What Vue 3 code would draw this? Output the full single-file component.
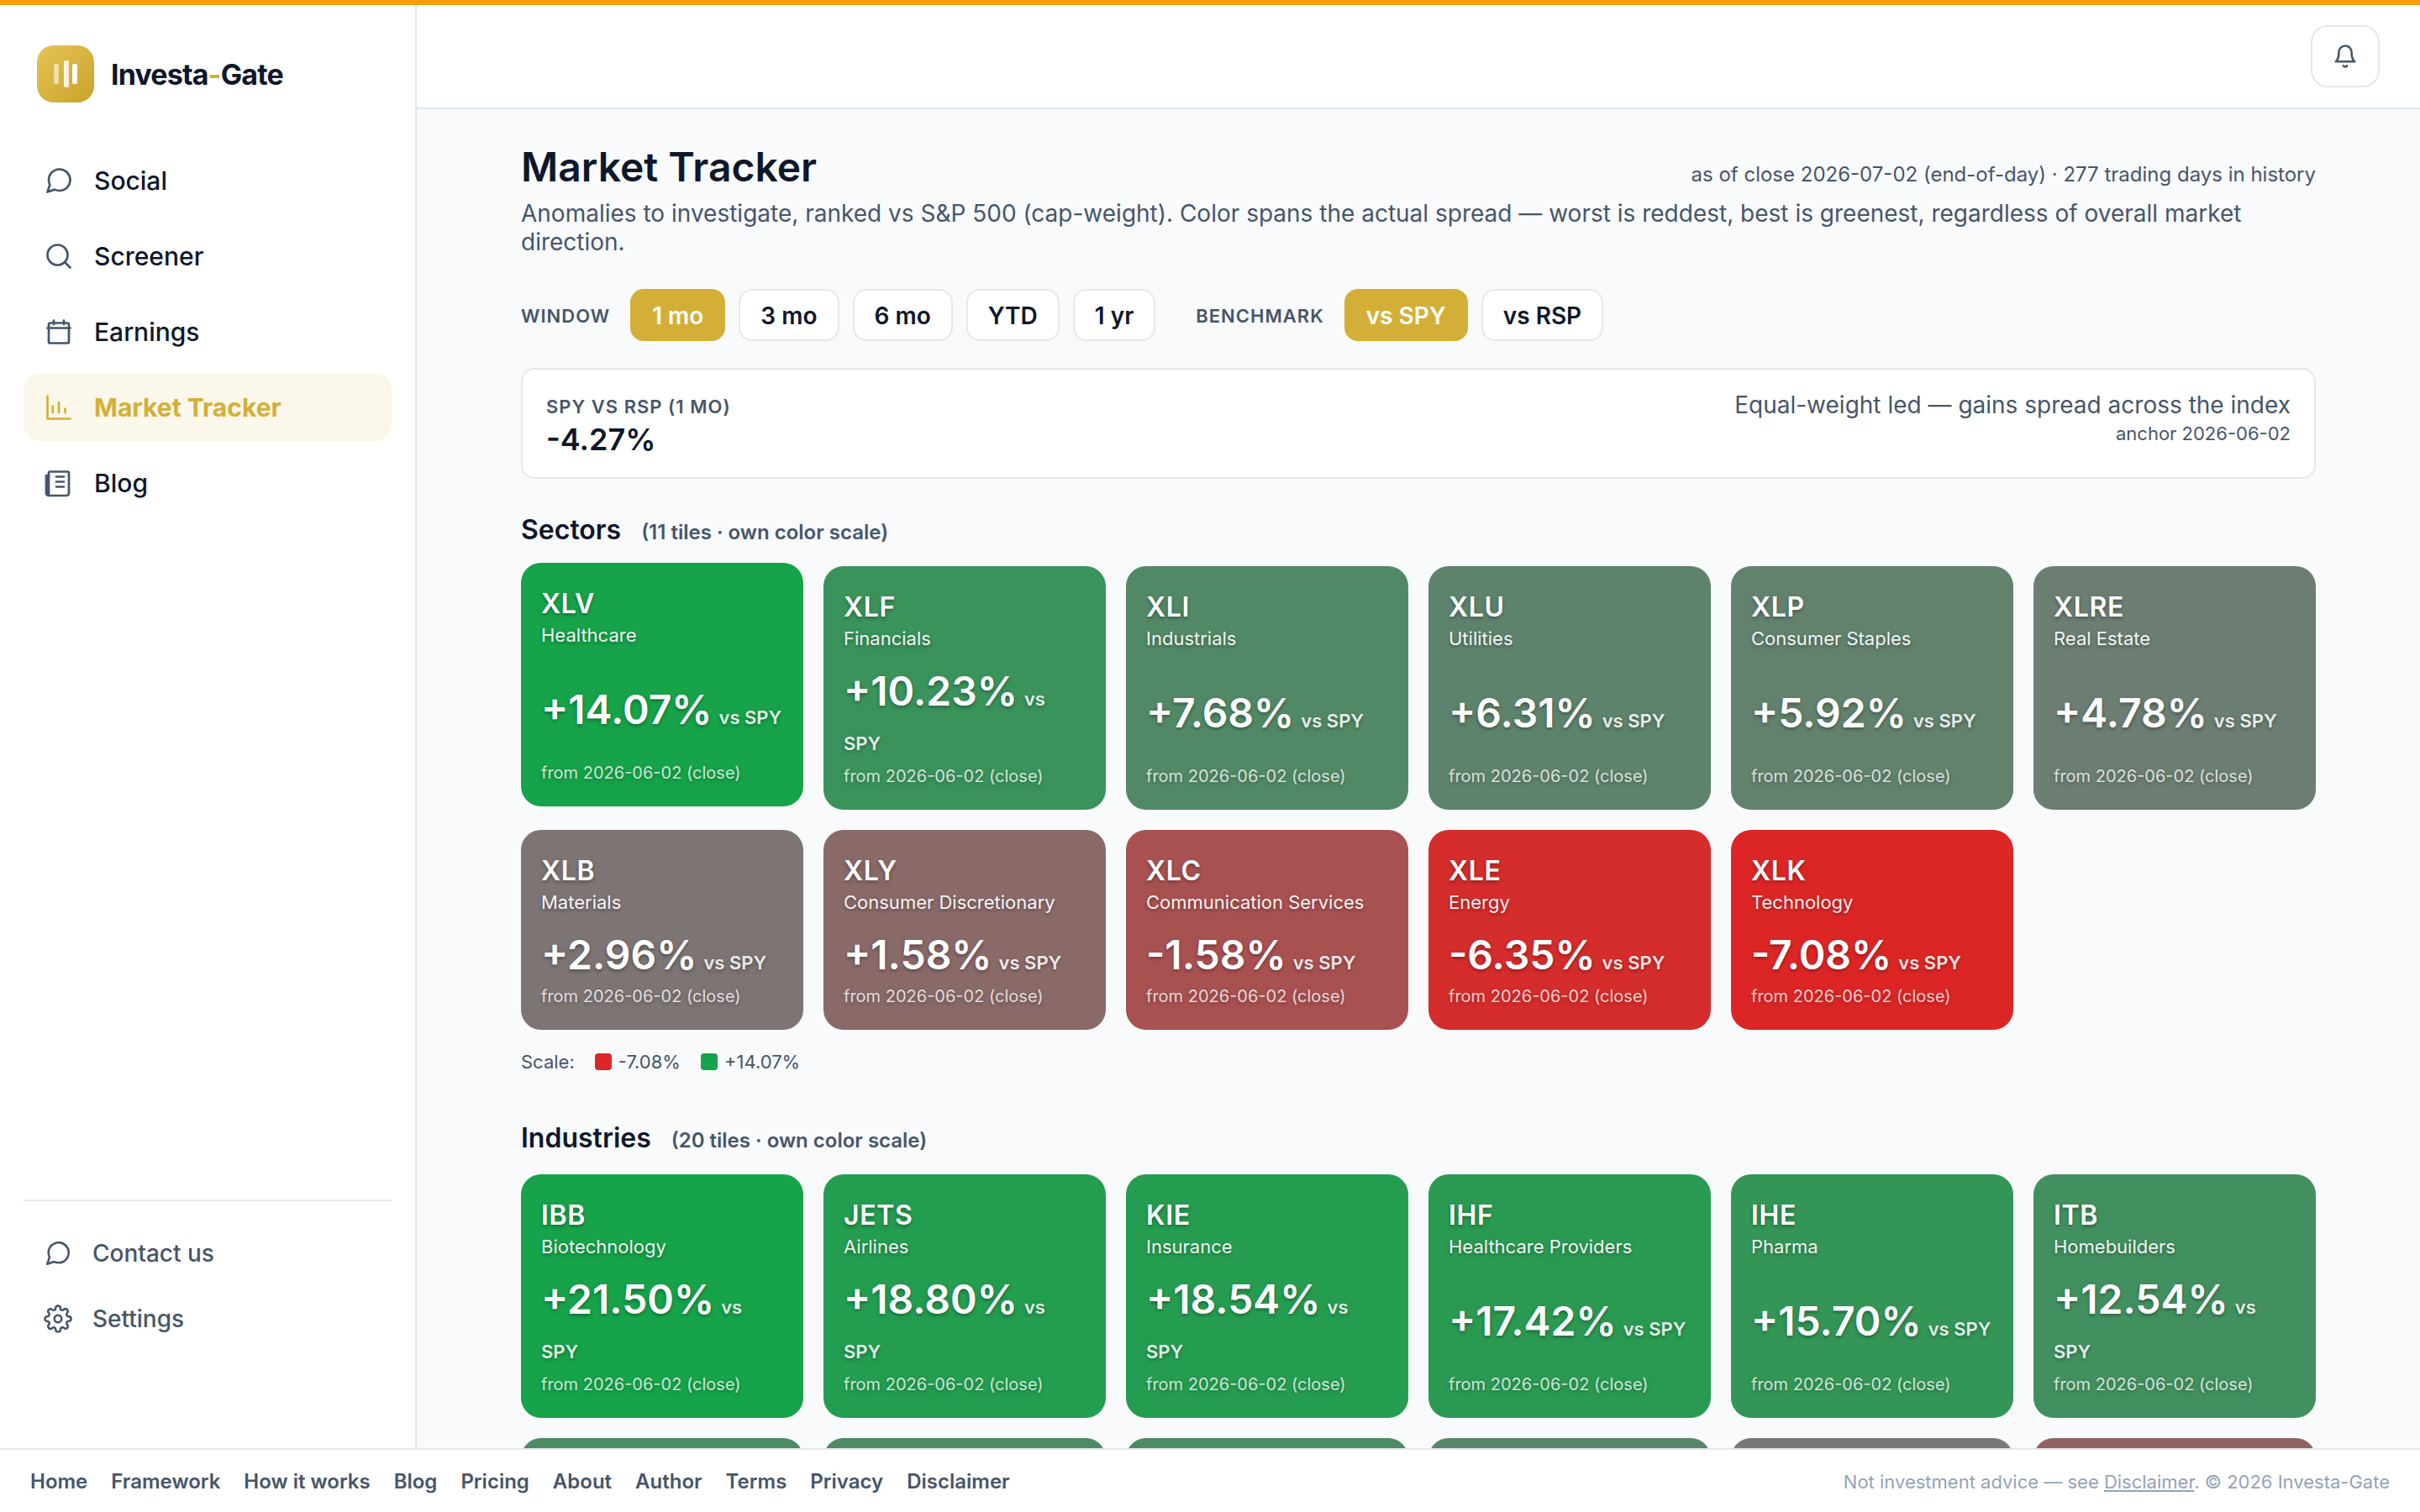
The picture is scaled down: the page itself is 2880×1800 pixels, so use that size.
<script setup>
import { ref, computed } from "vue";

const navItems = [
  { label: "Social", icon: "chat" },
  { label: "Screener", icon: "search" },
  { label: "Earnings", icon: "calendar" },
  { label: "Market Tracker", icon: "chart", active: true },
  { label: "Blog", icon: "news" },
];

const footerLinks = [
  "Home",
  "Framework",
  "How it works",
  "Blog",
  "Pricing",
  "About",
  "Author",
  "Terms",
  "Privacy",
  "Disclaimer",
];

const windows = ["1 mo", "3 mo", "6 mo", "YTD", "1 yr"];
const benchmarks = ["SPY", "RSP"];
const activeWindow = ref("1 mo");
const benchmark = ref("SPY");
const anchor = "2026-06-02";

const groups = [
  {
    title: "Sectors",
    count: 11,
    min: -7.08,
    max: 14.07,
    legend: true,
    tiles: [
      { ticker: "XLV", name: "Healthcare", value: 14.07, raised: true },
      { ticker: "XLF", name: "Financials", value: 10.23 },
      { ticker: "XLI", name: "Industrials", value: 7.68 },
      { ticker: "XLU", name: "Utilities", value: 6.31 },
      { ticker: "XLP", name: "Consumer Staples", value: 5.92 },
      { ticker: "XLRE", name: "Real Estate", value: 4.78 },
      { ticker: "XLB", name: "Materials", value: 2.96 },
      { ticker: "XLY", name: "Consumer Discretionary", value: 1.58 },
      { ticker: "XLC", name: "Communication Services", value: -1.58 },
      { ticker: "XLE", name: "Energy", value: -6.35 },
      { ticker: "XLK", name: "Technology", value: -7.08 },
    ],
  },
  {
    title: "Industries",
    count: 20,
    min: -18.3,
    max: 21.5,
    tiles: [
      { ticker: "IBB", name: "Biotechnology", value: 21.5 },
      { ticker: "JETS", name: "Airlines", value: 18.8 },
      { ticker: "KIE", name: "Insurance", value: 18.54 },
      { ticker: "IHF", name: "Healthcare Providers", value: 17.42 },
      { ticker: "IHE", name: "Pharma", value: 15.7 },
      { ticker: "ITB", name: "Homebuilders", value: 12.54 },
      { value: 10.8 },
      { value: 10.1 },
      { value: 10.4 },
      { value: 7.8 },
      { value: 1.8 },
      { value: -3.4 },
    ],
  },
];

const GREEN = [22, 163, 74];
const GRAY = [120, 120, 120];
const RED = [220, 38, 38];

// gray sits at the midpoint of the group's own range
function tileColor(value, group) {
  const mid = (group.max + group.min) / 2;
  const t = (value - mid) / (group.max - mid);
  const end = t >= 0 ? GREEN : RED;
  const rgb = GRAY.map((c, i) => Math.round(c + (end[i] - c) * Math.abs(t)));
  return `rgb(${rgb.join(", ")})`;
}

function pct(value) {
  return (value > 0 ? "+" : "") + value.toFixed(2) + "%";
}

const spreadLabel = computed(() => `SPY vs RSP (${activeWindow.value})`);
</script>

<template>
  <div class="app">
    <div class="stripe"></div>

    <div class="shell">
      <aside class="sidebar">
        <div class="brand">
          <svg class="logo-bars" viewBox="0 0 68 68" fill="#fff">
            <rect x="20" y="22" width="6" height="24" rx="2" opacity="0.55" />
            <rect x="32" y="18" width="6" height="32" rx="2" opacity="0.85" />
            <rect x="42" y="22" width="6" height="24" rx="2" />
          </svg>
          <span class="brand-name">Investa<span class="dash">-</span>Gate</span>
        </div>

        <nav class="nav">
          <a
            v-for="item in navItems"
            :key="item.label"
            class="nav-item"
            :class="{ active: item.active }"
          >
            <svg class="icon" viewBox="0 0 24 24">
              <path
                v-if="item.icon === 'chat'"
                d="M21 11.5a8.38 8.38 0 0 1-.9 3.8 8.5 8.5 0 0 1-7.6 4.7 8.38 8.38 0 0 1-3.8-.9L3 21l1.9-5.7a8.38 8.38 0 0 1-.9-3.8 8.5 8.5 0 0 1 4.7-7.6 8.38 8.38 0 0 1 3.8-.9h.5a8.48 8.48 0 0 1 8 8v.5z"
              />
              <template v-else-if="item.icon === 'search'">
                <circle cx="11" cy="11" r="8" />
                <path d="M21 21l-4.35-4.35" />
              </template>
              <template v-else-if="item.icon === 'calendar'">
                <rect x="4" y="5" width="16" height="16" rx="1.2" />
                <path d="M8 3v3M16 3v3M3 9h18" />
              </template>
              <path
                v-else-if="item.icon === 'chart'"
                d="M3 3v18h18M7.2 11v5M12 8v8M17 13v3"
              />
              <template v-else>
                <path d="M4 22h14a2 2 0 0 0 2-2V4a1 1 0 0 0-1-1H5a1 1 0 0 0-1 1v18z" />
                <path d="M4 22a2 2 0 0 1-2-2V6h2M3 7v14M10 7h6M10 11h6M10 15h6" />
              </template>
            </svg>
            <span>{{ item.label }}</span>
          </a>
        </nav>

        <div class="side-bottom">
          <a class="side-link">
            <svg class="icon" viewBox="0 0 24 24">
              <path
                d="M21 11.5a8.38 8.38 0 0 1-.9 3.8 8.5 8.5 0 0 1-7.6 4.7 8.38 8.38 0 0 1-3.8-.9L3 21l1.9-5.7a8.38 8.38 0 0 1-.9-3.8 8.5 8.5 0 0 1 4.7-7.6 8.38 8.38 0 0 1 3.8-.9h.5a8.48 8.48 0 0 1 8 8v.5z"
              />
            </svg>
            <span>Contact us</span>
          </a>
          <a class="side-link">
            <svg class="icon" viewBox="0 0 24 24">
              <circle cx="12" cy="12" r="3" />
              <path
                d="M19.4 15a1.65 1.65 0 0 0 .33 1.82l.06.06a2 2 0 0 1 0 2.83 2 2 0 0 1-2.83 0l-.06-.06a1.65 1.65 0 0 0-1.82-.33 1.65 1.65 0 0 0-1 1.51V21a2 2 0 0 1-2 2 2 2 0 0 1-2-2v-.09A1.65 1.65 0 0 0 9 19.4a1.65 1.65 0 0 0-1.82.33l-.06.06a2 2 0 0 1-2.83 0 2 2 0 0 1 0-2.83l.06-.06a1.65 1.65 0 0 0 .33-1.82 1.65 1.65 0 0 0-1.51-1H3a2 2 0 0 1-2-2 2 2 0 0 1 2-2h.09A1.65 1.65 0 0 0 4.6 9a1.65 1.65 0 0 0-.33-1.82l-.06-.06a2 2 0 0 1 0-2.83 2 2 0 0 1 2.83 0l.06.06a1.65 1.65 0 0 0 1.82.33H9a1.65 1.65 0 0 0 1-1.51V3a2 2 0 0 1 2-2 2 2 0 0 1 2 2v.09a1.65 1.65 0 0 0 1 1.51 1.65 1.65 0 0 0 1.82-.33l.06-.06a2 2 0 0 1 2.83 0 2 2 0 0 1 0 2.83l-.06.06a1.65 1.65 0 0 0-.33 1.82V9a1.65 1.65 0 0 0 1.51 1H21a2 2 0 0 1 2 2 2 2 0 0 1-2 2h-.09a1.65 1.65 0 0 0-1.51 1z"
              />
            </svg>
            <span>Settings</span>
          </a>
        </div>
      </aside>

      <div class="main">
        <header class="topbar">
          <button class="bell">
            <svg class="icon" viewBox="0 0 24 24">
              <path d="M18 8A6 6 0 0 0 6 8c0 7-3 9-3 9h18s-3-2-3-9" />
              <path d="M13.73 21a2 2 0 0 1-3.46 0" />
            </svg>
          </button>
        </header>

        <main class="content">
          <div class="title-row">
            <h1>Market Tracker</h1>
            <span class="asof">as of close 2026-07-02 (end-of-day) · 277 trading days in history</span>
          </div>
          <p class="subtitle">
            Anomalies to investigate, ranked vs S&amp;P 500 (cap-weight). Color spans the actual spread —
            worst is reddest, best is greenest, regardless of overall market direction.
          </p>

          <div class="controls">
            <div class="control-group">
              <span class="control-label">Window</span>
              <div class="chips">
                <button
                  v-for="w in windows"
                  :key="w"
                  class="chip"
                  :class="{ on: w === activeWindow }"
                  @click="activeWindow = w"
                >
                  {{ w }}
                </button>
              </div>
            </div>
            <div class="control-group">
              <span class="control-label">Benchmark</span>
              <div class="chips">
                <button
                  v-for="b in benchmarks"
                  :key="b"
                  class="chip"
                  :class="{ on: b === benchmark }"
                  @click="benchmark = b"
                >
                  vs {{ b }}
                </button>
              </div>
            </div>
          </div>

          <div class="spread">
            <div>
              <div class="spread-label">{{ spreadLabel }}</div>
              <div class="spread-value">-4.27%</div>
            </div>
            <div class="spread-note">
              <div>Equal-weight led — gains spread across the index</div>
              <div class="spread-anchor">anchor {{ anchor }}</div>
            </div>
          </div>

          <section v-for="group in groups" :key="group.title" class="group">
            <h2>
              {{ group.title }}
              <span class="group-sub">({{ group.count }} tiles · own color scale)</span>
            </h2>
            <div class="tiles">
              <div
                v-for="(tile, index) in group.tiles"
                :key="index"
                class="tile"
                :class="{ raised: tile.raised }"
                :style="{ background: tileColor(tile.value, group) }"
              >
                <template v-if="tile.ticker">
                  <div>
                    <div class="ticker">{{ tile.ticker }}</div>
                    <div class="name">{{ tile.name }}</div>
                  </div>
                  <div class="value">
                    {{ pct(tile.value) }}<span class="versus">vs {{ benchmark }}</span>
                  </div>
                  <div class="from">from {{ anchor }} (close)</div>
                </template>
              </div>
            </div>
            <div v-if="group.legend" class="scale">
              <span>Scale:</span>
              <span class="scale-item"><i class="swatch low"></i>{{ pct(group.min) }}</span>
              <span class="scale-item"><i class="swatch high"></i>{{ pct(group.max) }}</span>
            </div>
          </section>
        </main>
      </div>
    </div>

    <footer class="footer">
      <nav class="footer-links">
        <a v-for="link in footerLinks" :key="link">{{ link }}</a>
      </nav>
      <span class="legal">Not investment advice — see <u>Disclaimer</u>. © 2026 Investa-Gate</span>
    </footer>
  </div>
</template>

<style>
body {
  margin: 0;
  background: #f8fafc;
  overflow: hidden;
}
</style>

<style scoped>
* {
  box-sizing: border-box;
}

.app {
  display: flex;
  flex-direction: column;
  height: 100vh;
  font-family: Inter, "Liberation Sans", sans-serif;
  color: #0f172a;
}

.stripe {
  flex: none;
  height: 6px;
  background: #f59e0b;
}

.shell {
  flex: 1;
  min-height: 0;
  display: flex;
}

.icon {
  flex: none;
  width: 36px;
  height: 36px;
  fill: none;
  stroke: #475569;
  stroke-width: 1.8;
  stroke-linecap: round;
  stroke-linejoin: round;
}

/* sidebar */
.sidebar {
  flex: none;
  display: flex;
  flex-direction: column;
  width: 496px;
  padding: 48px 28px 115px;
  background: #fff;
  border-right: 2px solid #e5e7eb;
}

.brand {
  display: flex;
  align-items: center;
  gap: 20px;
  padding-left: 16px;
}

.logo-bars {
  width: 68px;
  height: 68px;
  border-radius: 20px;
  background: linear-gradient(135deg, #e5c558, #c9a227);
}

.brand-name {
  font-size: 34px;
  font-weight: 700;
  letter-spacing: -0.025em;
}

.dash {
  color: #d4af37;
}

.nav {
  display: flex;
  flex-direction: column;
  gap: 9px;
  margin-top: 52px;
}

.nav-item {
  display: flex;
  align-items: center;
  gap: 24px;
  height: 81px;
  padding: 0 24px;
  border-radius: 20px;
  font-size: 30px;
  font-weight: 500;
}

.nav-item.active {
  background: #fbf7eb;
  color: #d4af37;
  font-weight: 700;
}

.nav-item.active .icon {
  stroke: #d4af37;
}

.side-bottom {
  margin-top: auto;
  padding-top: 23px;
  border-top: 2px solid #e5e7eb;
}

.side-link {
  display: flex;
  align-items: center;
  gap: 24px;
  height: 78px;
  padding: 0 24px;
  color: #475569;
  font-size: 28px;
  font-weight: 500;
}

.side-link .icon {
  width: 34px;
  height: 34px;
}

/* main column */
.main {
  flex: 1;
  display: flex;
  flex-direction: column;
  min-width: 0;
}

.topbar {
  flex: none;
  display: flex;
  align-items: center;
  justify-content: flex-end;
  height: 124px;
  padding-right: 48px;
  background: #fff;
  border-bottom: 2px solid #e2e8f0;
}

.bell {
  display: flex;
  align-items: center;
  justify-content: center;
  width: 82px;
  height: 74px;
  padding: 0;
  background: #fff;
  border: 2px solid #e5e7eb;
  border-radius: 20px;
}

.bell .icon {
  width: 30px;
  height: 30px;
  stroke-width: 2;
}

.content {
  flex: 1;
  min-height: 0;
  overflow: hidden;
  padding: 40px 124px 0;
}

.title-row {
  display: flex;
  align-items: baseline;
  justify-content: space-between;
}

h1 {
  margin: 0;
  font-size: 48px;
  line-height: 58px;
  font-weight: 600;
}

.asof {
  font-size: 24px;
  color: #475569;
}

.subtitle {
  margin: 9px 0 0;
  font-size: 28px;
  line-height: 34px;
  color: #475569;
}

.controls {
  display: flex;
  gap: 48px;
  margin-top: 39px;
}

.control-group {
  display: flex;
  align-items: center;
  gap: 24px;
}

.control-label,
.spread-label {
  font-size: 22px;
  font-weight: 600;
  letter-spacing: 0.046em;
  text-transform: uppercase;
  color: #475569;
}

.control-label {
  padding-top: 2px;
}

.chips {
  display: flex;
  gap: 16px;
}

.chip {
  height: 62px;
  padding: 2px 24px 0;
  background: #fff;
  border: 2px solid #e5e7eb;
  border-radius: 16px;
  color: #0f172a;
  font-family: inherit;
  font-size: 28px;
  font-weight: 600;
}

.chip.on {
  background: #d4af37;
  border-color: #d4af37;
  color: #fff;
}

.spread {
  display: flex;
  align-items: baseline;
  justify-content: space-between;
  height: 132px;
  margin-top: 32px;
  padding: 25px 28px 0;
  background: #fff;
  border: 2px solid #e5e7eb;
  border-radius: 16px;
}

.spread-label {
  line-height: 27px;
}

.spread-value {
  margin-top: 3px;
  font-size: 36px;
  line-height: 44px;
  font-weight: 600;
}

.spread-note {
  font-size: 28px;
  line-height: 34px;
  color: #475569;
  text-align: right;
}

.spread-anchor {
  margin-top: 4px;
  font-size: 22px;
  line-height: 27px;
}

/* tile groups */
.group {
  margin-top: 41px;
}

.group + .group {
  margin-top: 57px;
}

h2 {
  display: flex;
  align-items: baseline;
  gap: 24px;
  margin: 0 0 24px;
  font-size: 32px;
  line-height: 39px;
  font-weight: 600;
}

.group-sub {
  font-size: 24px;
  line-height: 29px;
  color: #475569;
}

.tiles {
  display: grid;
  grid-template-columns: repeat(6, 1fr);
  gap: 24px;
}

.tile {
  display: flex;
  flex-direction: column;
  justify-content: space-between;
  min-height: 238px;
  padding: 28px 24px;
  border-radius: 24px;
  color: #fff;
  text-shadow: 0 2px 4px rgba(0, 0, 0, 0.35);
}

.tile.raised {
  transform: translateY(-4px);
}

.ticker {
  font-size: 32px;
  line-height: 41px;
  font-weight: 600;
  letter-spacing: 0.02em;
}

.name {
  margin-top: 4px;
  font-size: 22px;
  line-height: 26px;
  opacity: 0.92;
}

.value {
  margin: 24px 0 10px;
  font-size: 48px;
  line-height: 52.5px;
  font-weight: 600;
}

.versus {
  margin-left: 8px;
  font-size: 22px;
  line-height: 1;
  opacity: 0.85;
}

.from {
  font-size: 20px;
  line-height: 24px;
  opacity: 0.75;
}

.scale {
  display: flex;
  align-items: center;
  gap: 24px;
  margin-top: 24px;
  font-size: 22px;
  line-height: 28px;
  color: #475569;
}

.scale-item {
  display: flex;
  align-items: center;
  gap: 8px;
}

.swatch {
  width: 20px;
  height: 20px;
  border-radius: 4px;
}

.swatch.low {
  background: #dc2626;
}

.swatch.high {
  background: #16a34a;
}

/* footer */
.footer {
  flex: none;
  display: flex;
  align-items: center;
  justify-content: space-between;
  height: 76px;
  padding: 1px 36px 0;
  background: #fff;
  border-top: 2px solid #e5e7eb;
  font-size: 24px;
}

.footer-links {
  display: flex;
  gap: 28px;
  font-weight: 600;
  color: #475569;
}

.legal {
  font-size: 22px;
  color: #94a3b8;
}
</style>
